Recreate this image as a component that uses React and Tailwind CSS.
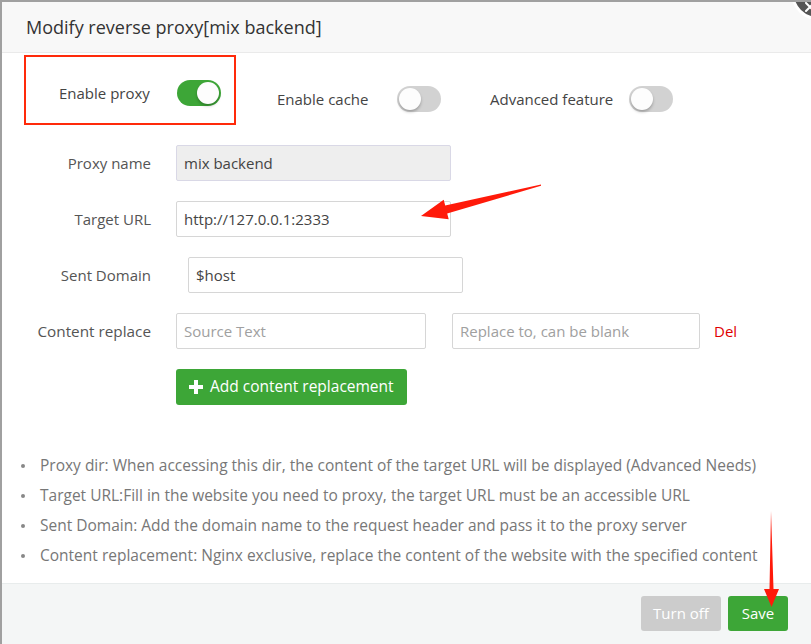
import React from "react";

function Toggle({ on }) {
  return (
    <div
      className={`relative w-[44px] h-[26px] rounded-full ${on ? "bg-[#3da637]" : "bg-[#d2d2d2]"}`}
    >
      <div
        className={`absolute top-[2px] w-[22px] h-[22px] rounded-full bg-[#fdfdfd] shadow-[0_2px_3px_rgba(0,0,0,0.25)] ${on ? "left-[20px]" : "left-[2px]"}`}
      />
    </div>
  );
}

function Row({ label, children, className = "" }) {
  return (
    <div className={`flex items-center h-[36px] ${className}`}>
      <div className="w-[151px] text-right text-[15px] text-[#555] whitespace-nowrap">{label}</div>
      {children}
    </div>
  );
}

const inputCls =
  "h-[36px] border border-[#d6d6d6] rounded-[2px] px-[7px] flex items-center text-[15px]";

export default function App() {
  return (
    <div
      className="relative w-[811px] h-[644px] overflow-hidden bg-white flex flex-col border-t-2 border-l-2 border-[#a0a0a0]"
      style={{ fontFamily: '"Open Sans", "Noto Sans", sans-serif' }}
    >
      {/* header */}
      <div className="h-[51px] shrink-0 bg-[#f8f8f8] border-b border-[#eaeaea] flex items-center pl-[24px] text-[18px] text-[#333]">
        Modify reverse proxy[mix backend]
      </div>

      {/* switches */}
      <div className="flex items-start mt-[2px]">
        <div className="ml-[22px] w-[212px] h-[70px] border-2 border-[#ff2a0a] flex items-center pl-[33px] pt-[6px]">
          <span className="text-[15px] text-[#444] w-[118px]">Enable proxy</span>
          <Toggle on />
        </div>
        <div className="flex items-center mt-[31px] ml-[41px]">
          <span className="text-[15px] text-[#444] w-[120px]">Enable cache</span>
          <Toggle />
        </div>
        <div className="flex items-center mt-[31px] ml-[49px]">
          <span className="text-[15px] text-[#444] w-[139px]">Advanced feature</span>
          <Toggle />
        </div>
      </div>

      {/* form */}
      <div className="flex flex-col gap-[20px] mt-[20px] -ml-[2px]">
        <Row label="Proxy name">
          <div className={`${inputCls} ml-[25px] w-[275px] bg-[#eeeeee] border-[#d9d8e6] text-[#444]`}>
            mix backend
          </div>
        </Row>
        <Row label="Target URL">
          <div className={`${inputCls} ml-[25px] w-[275px] text-[#444]`}>http://127.0.0.1:2333</div>
        </Row>
        <Row label="Sent Domain">
          <div className={`${inputCls} ml-[37px] w-[275px] text-[#444]`}>$host</div>
        </Row>
        <Row label={<span className="text-[15.3px]">Content replace</span>}>
          <div className={`${inputCls} ml-[25px] w-[250px] text-[#a0a0a0]`}>Source Text</div>
          <div className={`${inputCls} ml-[26px] w-[248px] text-[#a0a0a0]`}>
            Replace to, can be blank
          </div>
          <span className="ml-[14px] text-[15px] text-[#e00000]">Del</span>
        </Row>
        <div className="ml-[176px]">
          <div className="inline-flex items-center h-[36px] w-[231px] rounded-[3px] bg-[#3da637] text-white text-[15.5px] pl-[13px]">
            <svg width="14" height="14" viewBox="0 0 14 14" className="mr-[7px]">
              <rect x="5" y="0" width="4" height="14" fill="white" />
              <rect x="0" y="5" width="14" height="4" fill="white" />
            </svg>
            Add content replacement
          </div>
        </div>
      </div>

      {/* tips */}
      <ul className="mt-[50px] ml-[19px] flex flex-col gap-[9px] text-[15.5px] text-[#777]">
        {[
          "Proxy dir: When accessing this dir, the content of the target URL will be displayed (Advanced Needs)",
          "Target URL:Fill in the website you need to proxy, the target URL must be an accessible URL",
          "Sent Domain: Add the domain name to the request header and pass it to the proxy server",
          "Content replacement: Nginx exclusive, replace the content of the website with the specified content",
        ].map((t) => (
          <li key={t} className="flex items-center h-[21px] whitespace-nowrap">
            <span className="w-[4px] h-[4px] rounded-full bg-[#888] mr-[15px]" />
            {t}
          </li>
        ))}
      </ul>

      {/* footer */}
      <div className="mt-auto h-[61px] shrink-0 bg-[#f4f6f6] border-t border-[#e8ecec] flex items-start justify-end pt-[12px] pr-[23px] gap-[7px]">
        <div className="w-[80px] h-[35px] rounded-[3px] bg-[#cccccc] text-white text-[15px] flex items-center justify-center">
          Turn off
        </div>
        <div className="w-[60px] h-[35px] rounded-[3px] bg-[#3da637] text-white text-[15px] flex items-center justify-center">
          Save
        </div>
      </div>

      {/* close button */}
      <div className="absolute left-[789px] top-[-36px] w-[54px] h-[54px] rounded-full bg-[#555] border-[3px] border-white">
        <svg className="absolute left-[10px] top-[32px]" width="12" height="12" viewBox="0 0 12 12">
          <path d="M2 2 L10 10 M10 2 L2 10" stroke="white" strokeWidth="2" strokeLinecap="round" />
        </svg>
      </div>

      {/* annotation arrows */}
      <svg className="absolute left-[-2px] top-[-2px] pointer-events-none" width="811" height="644">
        <polygon
          points="541,184.5 445.2,205.6 443.7,199.8 421,216 448.7,219.2 447.2,213.4 541,185.8"
          fill="#ff1a0a"
        />
        <polygon
          points="771,511 773.5,589 779,589 771.5,607 764,589 769.5,589 771,511"
          fill="#ff1a0a"
        />
      </svg>
    </div>
  );
}
